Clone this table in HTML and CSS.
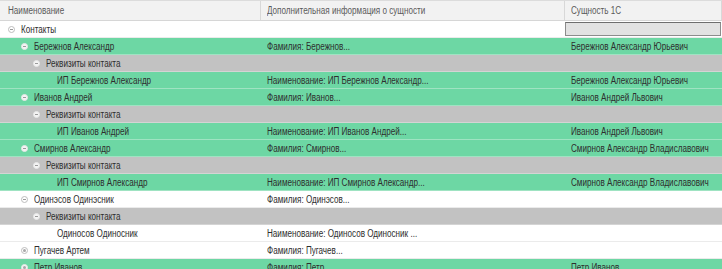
FILE: index.html
```html
<!DOCTYPE html>
<html>
<head>
<meta charset="utf-8">
<link rel="stylesheet" href="styles.css">
</head>
<body>
<div class="grid">
  <div class="row head">
    <div class="cell c1"><span class="t">Наименование</span></div>
    <div class="cell c2"><span class="t">Дополнительная информация о сущности</span></div>
    <div class="cell c3"><span class="t">Сущность 1С</span></div>
  </div>
  <div class="row white">
    <div class="cell c1 l0"><span class="ic minus"></span><span class="t">Контакты</span></div>
    <div class="cell c2"></div>
    <div class="cell c3"><div class="input"></div></div>
  </div>
  <div class="row green">
    <div class="cell c1 l1"><span class="ic minus"></span><span class="t">Бережнов Александр</span></div>
    <div class="cell c2"><span class="t">Фамилия: Бережнов...</span></div>
    <div class="cell c3"><span class="t">Бережнов Александр Юрьевич</span></div>
  </div>
  <div class="row gray">
    <div class="cell c1 l2"><span class="ic minus"></span><span class="t">Реквизиты контакта</span></div>
    <div class="cell c2"></div>
    <div class="cell c3"></div>
  </div>
  <div class="row green">
    <div class="cell c1 l3"><span class="t">ИП Бережнов Александр</span></div>
    <div class="cell c2"><span class="t">Наименование: ИП Бережнов Александр...</span></div>
    <div class="cell c3"><span class="t">Бережнов Александр Юрьевич</span></div>
  </div>
  <div class="row green">
    <div class="cell c1 l1"><span class="ic minus"></span><span class="t">Иванов Андрей</span></div>
    <div class="cell c2"><span class="t">Фамилия: Иванов...</span></div>
    <div class="cell c3"><span class="t">Иванов Андрей Львович</span></div>
  </div>
  <div class="row gray">
    <div class="cell c1 l2"><span class="ic minus"></span><span class="t">Реквизиты контакта</span></div>
    <div class="cell c2"></div>
    <div class="cell c3"></div>
  </div>
  <div class="row green">
    <div class="cell c1 l3"><span class="t">ИП Иванов Андрей</span></div>
    <div class="cell c2"><span class="t">Наименование: ИП Иванов Андрей...</span></div>
    <div class="cell c3"><span class="t">Иванов Андрей Львович</span></div>
  </div>
  <div class="row green">
    <div class="cell c1 l1"><span class="ic minus"></span><span class="t">Смирнов Александр</span></div>
    <div class="cell c2"><span class="t">Фамилия: Смирнов...</span></div>
    <div class="cell c3"><span class="t">Смирнов Александр Владиславович</span></div>
  </div>
  <div class="row gray">
    <div class="cell c1 l2"><span class="ic minus"></span><span class="t">Реквизиты контакта</span></div>
    <div class="cell c2"></div>
    <div class="cell c3"></div>
  </div>
  <div class="row green">
    <div class="cell c1 l3"><span class="t">ИП Смирнов Александр</span></div>
    <div class="cell c2"><span class="t">Наименование: ИП Смирнов Александр...</span></div>
    <div class="cell c3"><span class="t">Смирнов Александр Владиславович</span></div>
  </div>
  <div class="row white">
    <div class="cell c1 l1"><span class="ic minus"></span><span class="t">Одинэсов Одинэсник</span></div>
    <div class="cell c2"><span class="t">Фамилия: Одинэсов...</span></div>
    <div class="cell c3"></div>
  </div>
  <div class="row gray">
    <div class="cell c1 l2"><span class="ic minus"></span><span class="t">Реквизиты контакта</span></div>
    <div class="cell c2"></div>
    <div class="cell c3"></div>
  </div>
  <div class="row white">
    <div class="cell c1 l3"><span class="t">Одиносов Одиносник</span></div>
    <div class="cell c2"><span class="t">Наименование: Одиносов Одиносник ...</span></div>
    <div class="cell c3"></div>
  </div>
  <div class="row white">
    <div class="cell c1 l1"><span class="ic plus"></span><span class="t">Пугачев Артем</span></div>
    <div class="cell c2"><span class="t">Фамилия: Пугачев...</span></div>
    <div class="cell c3"></div>
  </div>
  <div class="row green">
    <div class="cell c1 l1"><span class="ic plus"></span><span class="t">Петр Иванов</span></div>
    <div class="cell c2"><span class="t">Фамилия: Петр...</span></div>
    <div class="cell c3"><span class="t">Петр Иванов</span></div>
  </div>
</div>
</body>
</html>
```

FILE: styles.css
```css
html, body {
  margin: 0;
  padding: 0;
  background: #ffffff;
  overflow: hidden;
}
.grid {
  font-family: "Liberation Sans", Arial, sans-serif;
  font-size: 10px;
  color: #2e2e2e;
  border-top: 1px solid #dcdcdc;
  width: 722px;
}
.t {
  display: inline-block;
  transform: scaleX(0.81);
  transform-origin: left center;
}
.row {
  display: grid;
  grid-template-columns: 261px 304px 157px;
  height: 16px;
  border-bottom: 1px solid #ebebeb;
}
.row.head {
  height: 19px;
  background: #f2f2f2;
  color: #5a5a5a;
  border-bottom: 1px solid #d6d6d6;
}
.row.head .cell {
  border-right: 1px solid #d8d8d8;
}
.row.head .c1 { padding-left: 8px; }
.row.green {
  background: #6dd7a4;
  border-bottom-color: #9fe3c2;
}
.row.gray {
  background: #c2c2c2;
  border-bottom-color: #d4d4d4;
}
.row.white {
  background: #ffffff;
}
.cell {
  display: flex;
  align-items: center;
  white-space: nowrap;
  overflow: hidden;
}
.c2 { padding-left: 6px; }
.c3 { padding-left: 6px; }
.l0 { padding-left: 8px; }
.l1 { padding-left: 21px; }
.l2 { padding-left: 33px; }
.l3 { padding-left: 57px; }
.ic {
  width: 5px;
  height: 5px;
  border: 1px solid #bdbdbd;
  border-radius: 50%;
  margin-right: 6px;
  position: relative;
  flex: none;
  background: #ffffff;
}
.ic.minus::after {
  content: "";
  position: absolute;
  left: 1px;
  top: 2px;
  width: 3px;
  height: 1px;
  background: #9a9a9a;
}
.ic.plus::after {
  content: "";
  position: absolute;
  left: 1px;
  top: 1px;
  width: 3px;
  height: 3px;
  border-radius: 50%;
  background: #a8a8a8;
}
.green .ic, .gray .ic {
  border-color: #e6e6e6;
  background: #f4f4f4;
}
.input {
  width: 154px;
  height: 12px;
  background: #e2e2e2;
  border: 1px solid #8c8c8c;
  border-top-color: #6e6e6e;
  margin-left: -6px;
}
```
